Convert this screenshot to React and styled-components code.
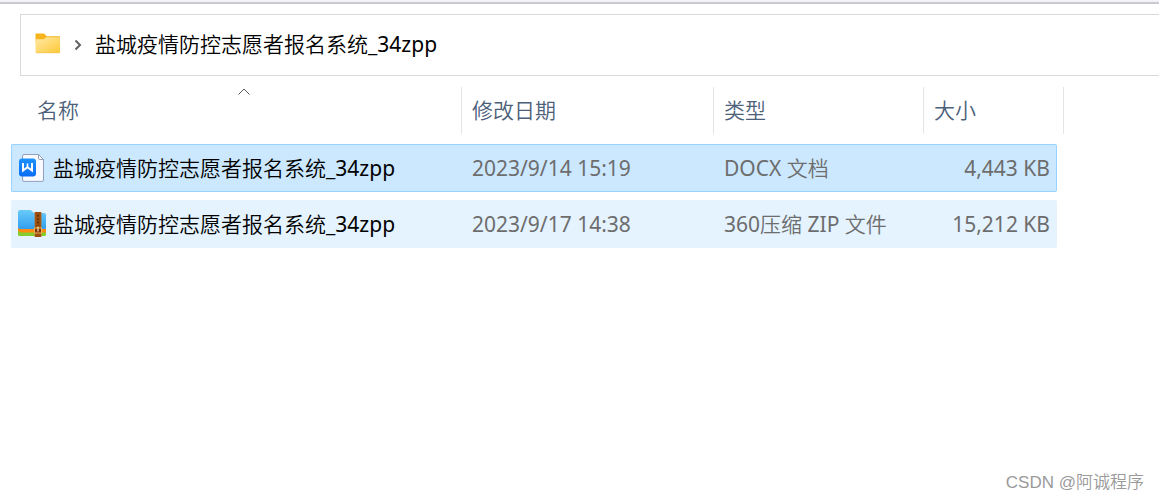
import React from "react";
import styled, { createGlobalStyle } from "styled-components";

const files = [
  {
    id: 1,
    name: "盐城疫情防控志愿者报名系统_34zpp",
    date: "2023/9/14 15:19",
    type: "DOCX 文档",
    size: "4,443 KB",
    icon: "docx",
    selected: true,
  },
  {
    id: 2,
    name: "盐城疫情防控志愿者报名系统_34zpp",
    date: "2023/9/17 14:38",
    type: "360压缩 ZIP 文件",
    size: "15,212 KB",
    icon: "zip",
    selected: false,
  },
];

const FolderIcon = () => (
  <svg width="26" height="22" viewBox="0 0 26 22" aria-hidden="true">
    <defs>
      <linearGradient id="folder" x1="0" y1="0" x2="1" y2="1">
        <stop offset="0" stopColor="#ffe9a6" />
        <stop offset="1" stopColor="#ffc937" />
      </linearGradient>
    </defs>
    <path d="M1 .5h8.200l2.300 2.800H24.200q.8 0 .8.8V10H.5V1q0-.5.5-.5z" fill="#f7b41c" />
    <path d="M.5 6.200h8.200l2.600-2H24.400q.6 0 .6.600V19.200q0 .8-.8.8H1.300q-.8 0-.8-.8z" fill="url(#folder)" />
    <path d="M1 19.800h23.600" stroke="#f3c14b" strokeWidth=".6" />
  </svg>
);

const DocxIcon = () => (
  <svg width="28" height="28" viewBox="0 0 28 28" aria-hidden="true">
    <defs>
      <linearGradient id="writer" x1="0" y1="0" x2="0" y2="1">
        <stop offset="0" stopColor="#1b92ff" />
        <stop offset="1" stopColor="#0a6df5" />
      </linearGradient>
    </defs>
    <path d="M6 .5h14.500l5 5v20.500q0 1.400-1.400 1.400H6q-1.400 0-1.400-1.400V1.900Q4.600.5 6 .5z" fill="#f8faff" stroke="#8796b4" strokeWidth=".9" />
    <path d="M20.500.5v3.600q0 1.400 1.400 1.400h3.600z" fill="#fff" stroke="#8796b4" strokeWidth=".9" />
    <rect x="1" y="4.500" width="17" height="18" rx="3" fill="url(#writer)" />
    <path d="M5 9v7.500l4.500-3.200 4.500 3.200V9" fill="none" stroke="#fff" strokeWidth="2" />
    <path d="M9.500 9.500v4" stroke="#fff" strokeWidth="1.600" />
  </svg>
);

const ZipIcon = () => (
  <svg width="28" height="28" viewBox="0 0 28 28" aria-hidden="true">
    <defs>
      <linearGradient id="archive" x1="0" y1="0" x2="0" y2="1">
        <stop offset="0" stopColor="#6acbf8" />
        <stop offset="1" stopColor="#319ff0" />
      </linearGradient>
    </defs>
    <path d="M0 18h28v6q0 2-2 2H2q-2 0-2-2z" fill="#86cc2c" />
    <path d="M0 17h28v6H3q-3 0-3-2z" fill="#ff8b10" />
    <path d="M0 20.500q1 2 4 2h24V24q0 2-2 2H2q-2 0-2-2z" fill="#86cc2c" />
    <path d="M2 0h10q1 0 1.700.8l1.300 1.500q.7.700 1.700.700H26q2 0 2 2v14H3q-3 0-3-2V2q0-2 2-2z" fill="url(#archive)" />
    <path d="M17 2h6v25h-6z" fill="#9a4d0c" />
    <path d="M17 2v25M23 2v25" stroke="#b8661a" strokeWidth=".8" />
    <path d="M20 5v11" stroke="#44220a" strokeWidth="1.400" strokeDasharray="1.400 2" />
    <rect x="16.500" y="18" width="7" height="5" fill="#7b3408" stroke="#f2b45a" strokeWidth="1" />
    <path d="M20 16.500v5" stroke="#ffe3a8" strokeWidth="1.200" />
  </svg>
);

const App = () => {
  return (
    <>
      <GlobalStyle />
      <TopEdge />
      <AddressBar aria-label="路径">
        <FolderIcon />
        <Chevron viewBox="0 0 8 12" aria-hidden="true">
          <path d="M1.500 1.500 6 6l-4.500 4.500" />
        </Chevron>
        <Crumb href="#">盐城疫情防控志愿者报名系统_34zpp</Crumb>
      </AddressBar>
      <FileTable>
        <colgroup>
          <Col />
          <Col $width={252} />
          <Col $width={210} />
          <Col $width={133} />
        </colgroup>
        <thead>
          <tr>
            <HeadCell aria-sort="ascending">
              <HeadLabel $first>
                名称
                <SortArrow viewBox="0 0 12 7" aria-hidden="true">
                  <path d="M.500 6.500 6 1l5.500 5.500" />
                </SortArrow>
              </HeadLabel>
            </HeadCell>
            <HeadCell>
              <HeadLabel>修改日期</HeadLabel>
            </HeadCell>
            <HeadCell>
              <HeadLabel>类型</HeadLabel>
            </HeadCell>
            <HeadCell>
              <HeadLabel $last>大小</HeadLabel>
            </HeadCell>
          </tr>
        </thead>
        <tbody>
          {files.map((file) => (
            <FileRow key={file.id} $selected={file.selected}>
              <td>
                <FileName>
                  {file.icon === "docx" ? <DocxIcon /> : <ZipIcon />}
                  {file.name}
                </FileName>
              </td>
              <td>{file.date}</td>
              <td>{file.type}</td>
              <SizeCell>{file.size}</SizeCell>
            </FileRow>
          ))}
        </tbody>
      </FileTable>
      <Watermark>CSDN @阿诚程序</Watermark>
    </>
  );
};

const GlobalStyle = createGlobalStyle`
  * {
    box-sizing: border-box;
  }
  body {
    margin: 0;
    background: #fff;
    color: #000;
    font-family: "Noto Sans", "Noto Sans CJK SC DemiLight", "Noto Sans CJK SC", sans-serif;
    font-size: 21px;
    line-height: 28px;
  }
  #root {
    display: flex;
    flex-direction: column;
    min-height: 100vh;
  }
`;

const TopEdge = styled.div`
  height: 4px;
  background: #f3f3f7;
  border-bottom: 2px solid #c9c9d2;
`;

const AddressBar = styled.nav`
  display: flex;
  align-items: center;
  height: 62px;
  margin: 10px 0 0 20px;
  padding: 0 14px 2px;
  border: 1px solid #d9d9d9;
  border-right: none;
`;

const Chevron = styled.svg`
  width: 8px;
  height: 12px;
  margin: 2px 13px 0;
  fill: none;
  stroke: #606060;
  stroke-width: 2;
`;

const Crumb = styled.a`
  color: inherit;
  text-decoration: none;
`;

const FileTable = styled.table`
  width: calc(100% - 113px);
  margin: 3px 0 0 11px;
  table-layout: fixed;
  border-collapse: separate;
  border-spacing: 0 8px;
`;

const Col = styled.col`
  width: ${({ $width }) => ($width ? `${$width}px` : "auto")};
`;

const HeadCell = styled.th`
  height: 49px;
  padding: 0;
  vertical-align: top;
  text-align: left;
  font-weight: 350;
  color: #4c607a;
`;

const HeadLabel = styled.div`
  position: relative;
  display: flex;
  align-items: center;
  height: 47px;
  margin-left: ${({ $first }) => ($first ? "16px" : "0")};
  margin-right: ${({ $last }) => ($last ? "-7px" : "0")};
  padding: 0 0 2px 10px;
  border-right: 1px solid #e5e5e5;
`;

const SortArrow = styled.svg`
  position: absolute;
  top: 1px;
  left: calc(50% - 6px);
  width: 12px;
  height: 7px;
  fill: none;
  stroke: #5a5a5a;
`;

const FileRow = styled.tr`
  color: #6d6d6d;

  td {
    height: 48px;
    padding: 0 0 0 10px;
    background: ${({ $selected }) => ($selected ? "#cce8ff" : "#e5f3ff")};
    border: 1px solid ${({ $selected }) => ($selected ? "#99d1ff" : "#e5f3ff")};
    border-width: 1px 0;
  }
  td:first-child {
    padding-left: 6px;
    border-left-width: 1px;
    border-radius: 2px 0 0 2px;
    color: #000;
  }
  td:last-child {
    padding: 0 6px 0 0;
    border-right-width: 1px;
    border-radius: 0 2px 2px 0;
  }
`;

const FileName = styled.div`
  display: flex;
  align-items: center;
  gap: 7px;
  white-space: nowrap;
`;

const SizeCell = styled.td`
  text-align: right;
`;

const Watermark = styled.footer`
  margin: auto 15px 5px auto;
  font-family: "Liberation Sans", "Noto Sans CJK SC", sans-serif;
  font-size: 17px;
  font-weight: 350;
  line-height: 24px;
  color: #9a9a9a;
`;

export default App;
